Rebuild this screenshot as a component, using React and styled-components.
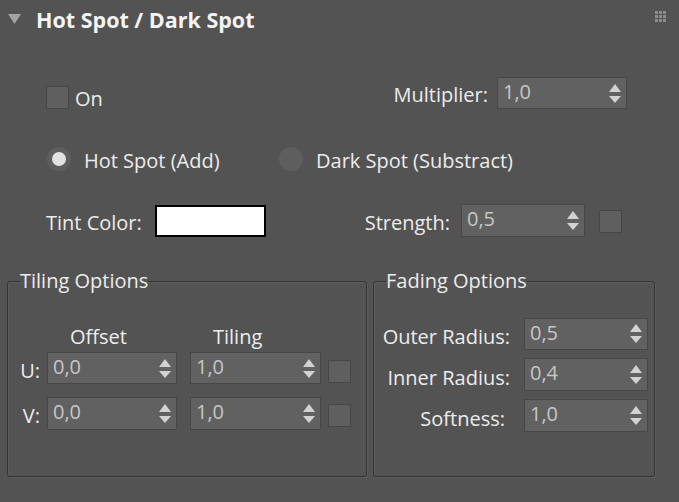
import React from "react";
import styled, { createGlobalStyle } from "styled-components";

const Global = createGlobalStyle`
  html, body { margin: 0; padding: 0; background: #535353; }
  * { box-sizing: border-box; }
`;

const FONT = `"Open Sans", "Noto Sans", "Liberation Sans", sans-serif`;

const Panel = styled.div`
  width: 679px;
  height: 502px;
  background: #535353;
  font-family: ${FONT};
  font-size: 20px;
  color: #ececec;
  display: flex;
  flex-direction: column;
  overflow: hidden;
`;

const Header = styled.div`
  height: 38px;
  display: flex;
  align-items: center;
  padding: 0 13px 0 8px;
`;

const Title = styled.div`
  margin-left: 15px;
  font-weight: 700;
  font-size: 21.5px;
  color: #f4f4f4;
  flex: 1;
`;

const Grip = styled.div`
  display: grid;
  grid-template-columns: repeat(3, 3px);
  gap: 1px;
  align-self: flex-start;
  margin-top: 11px;
  span { width: 3px; height: 3px; background: #8c8c8c; }
`;

const Row = styled.div`
  display: flex;
  align-items: center;
  height: ${(p) => p.$h}px;
  margin-top: ${(p) => p.$mt}px;
  padding: 0 ${(p) => p.$pr || 0}px 0 ${(p) => p.$pl || 0}px;
`;

const Right = styled.div`
  margin-left: auto;
  display: flex;
  align-items: center;
`;

const Left = styled.div`
  display: flex;
  align-items: center;
  margin-top: ${(p) => p.$mt || 0}px;
`;

const Label = styled.span`
  white-space: nowrap;
  margin-right: ${(p) => p.$mr || 0}px;
  margin-left: ${(p) => p.$ml || 0}px;
  padding-top: 3px;
`;

const Check = styled.div`
  width: 23px;
  height: 23px;
  background: #5f5f5f;
  border: 1px solid #464646;
  margin-left: ${(p) => p.$ml || 0}px;
  margin-top: ${(p) => p.$mt || 0}px;
  flex: none;
`;

const SpinBox = styled.div`
  width: ${(p) => p.$w}px;
  height: ${(p) => p.$h || 32}px;
  background: #616161;
  border: 1px solid #474747;
  display: flex;
  align-items: flex-start;
  justify-content: space-between;
  padding: 0 5px 0 5px;
  flex: none;
`;

const SpinValue = styled.span`
  color: #c6c6c6;
  line-height: 27px;
  font-size: 20px;
`;

const Arrows = styled.svg`
  align-self: center;
  flex: none;
`;

const Spinner = ({ w, h, value }) => (
  <SpinBox $w={w} $h={h}>
    <SpinValue>{value}</SpinValue>
    <Arrows width="12" height="19" viewBox="0 0 12 19">
      <polygon points="6,0 12,8 0,8" fill="#d2d2d2" />
      <polygon points="0,12 12,12 6,19" fill="#d2d2d2" />
    </Arrows>
  </SpinBox>
);

const RadioGrid = styled.div`
  display: grid;
  grid-template-columns: 232px auto;
  align-items: center;
`;

const RadioOpt = styled.label`
  display: flex;
  align-items: center;
  gap: 13px;
  white-space: nowrap;
  span + span { padding-top: 2px; }
`;

const RadioDot = styled.span`
  width: 24px;
  height: 24px;
  border-radius: 50%;
  background: #5e5e5e;
  display: flex;
  align-items: center;
  justify-content: center;
  flex: none;
  &::after {
    content: "";
    width: 14px;
    height: 14px;
    border-radius: 50%;
    background: ${(p) => (p.$on ? "#e2e2e2" : "transparent")};
  }
`;

const Swatch = styled.div`
  width: 111px;
  height: 32px;
  background: #ffffff;
  border: 2px solid #000000;
`;

const TintLabel = styled.span`
  width: 109px;
  white-space: nowrap;
  padding-top: 3px;
`;

const Groups = styled.div`
  display: flex;
  gap: 6px;
  padding-left: 7px;
  margin-top: 34px;
  height: 206px;
`;

const Group = styled.fieldset`
  margin: 0;
  width: ${(p) => p.$w}px;
  height: 206px;
  border: 1px solid #353535;
  border-radius: 3px;
  padding: 0 6px 0 ${(p) => p.$pl}px;
  box-shadow: 1px 1px 0 #5c5c5c, inset 1px 1px 0 #5c5c5c;
  min-width: 0;
`;

const Legend = styled.legend`
  padding: 0;
  margin-left: ${(p) => p.$ml || 0}px;
  line-height: 20px;
  font-size: 20px;
  color: #ececec;
`;

const TileGrid = styled.div`
  display: grid;
  grid-template-columns: 27px 143px 138px 23px;
  align-items: center;
  margin-top: ${(p) => p.$mt}px;
  height: ${(p) => p.$h}px;
`;

const ColHead = styled.span`
  padding-left: 23px;
`;

const Axis = styled.span`
  text-align: right;
  padding-right: 7px;
  padding-top: 4px;
`;

const FadeGrid = styled.div`
  display: grid;
  grid-template-columns: 1fr 124px;
  column-gap: 14px;
  row-gap: 8px;
  margin-top: 26px;
  align-items: center;
`;

const FadeLabel = styled.span`
  justify-self: end;
  white-space: nowrap;
  padding-top: 6px;
  margin-right: ${(p) => p.$mr || 0}px;
`;

export default function App() {
  return (
    <>
      <Global />
      <Panel>
        <Header>
          <svg width="13" height="10" viewBox="0 0 13 10">
            <polygon points="0,0 13,0 6.5,10" fill="#a3a3a3" />
          </svg>
          <Title>Hot Spot / Dark Spot</Title>
          <Grip>
            {Array.from({ length: 9 }).map((_, i) => (
              <span key={i} />
            ))}
          </Grip>
        </Header>

        <Row $h={32} $mt={39} $pl={46} $pr={52}>
          <Left $mt={8}>
            <Check />
            <Label $ml={6}>On</Label>
          </Left>
          <Right>
            <Label $mr={9}>Multiplier:</Label>
            <Spinner w={130} value="1,0" />
          </Right>
        </Row>

        <Row $h={24} $mt={38} $pl={47}>
          <RadioGrid>
            <RadioOpt>
              <RadioDot $on />
              <span>Hot Spot (Add)</span>
            </RadioOpt>
            <RadioOpt>
              <RadioDot />
              <span>Dark Spot (Substract)</span>
            </RadioOpt>
          </RadioGrid>
        </Row>

        <Row $h={33} $mt={33} $pl={46} $pr={57}>
          <TintLabel>Tint Color:</TintLabel>
          <Swatch />
          <Right>
            <Label $mr={11}>Strength:</Label>
            <Spinner w={124} h={33} value="0,5" />
            <Check $ml={14} $mt={1} />
          </Right>
        </Row>

        <Groups>
          <Group $w={360} $pl={12}>
            <Legend>Tiling Options</Legend>
            <TileGrid $mt={32} $h={24}>
              <span />
              <ColHead>Offset</ColHead>
              <ColHead>Tiling</ColHead>
              <span />
            </TileGrid>
            <TileGrid $mt={5} $h={32}>
              <Axis>U:</Axis>
              <Spinner w={130} value="0,0" />
              <Spinner w={131} value="1,0" />
              <Check $mt={6} />
            </TileGrid>
            <TileGrid $mt={13} $h={33}>
              <Axis>V:</Axis>
              <Spinner w={130} h={33} value="0,0" />
              <Spinner w={131} h={33} value="1,0" />
              <Check $mt={4} />
            </TileGrid>
          </Group>
          <Group $w={282} $pl={8}>
            <Legend $ml={4}>Fading Options</Legend>
            <FadeGrid>
              <FadeLabel>Outer Radius:</FadeLabel>
              <Spinner w={124} value="0,5" />
              <FadeLabel>Inner Radius:</FadeLabel>
              <Spinner w={124} h={33} value="0,4" />
              <FadeLabel $mr={5}>Softness:</FadeLabel>
              <Spinner w={124} h={33} value="1,0" />
            </FadeGrid>
          </Group>
        </Groups>
      </Panel>
    </>
  );
}
